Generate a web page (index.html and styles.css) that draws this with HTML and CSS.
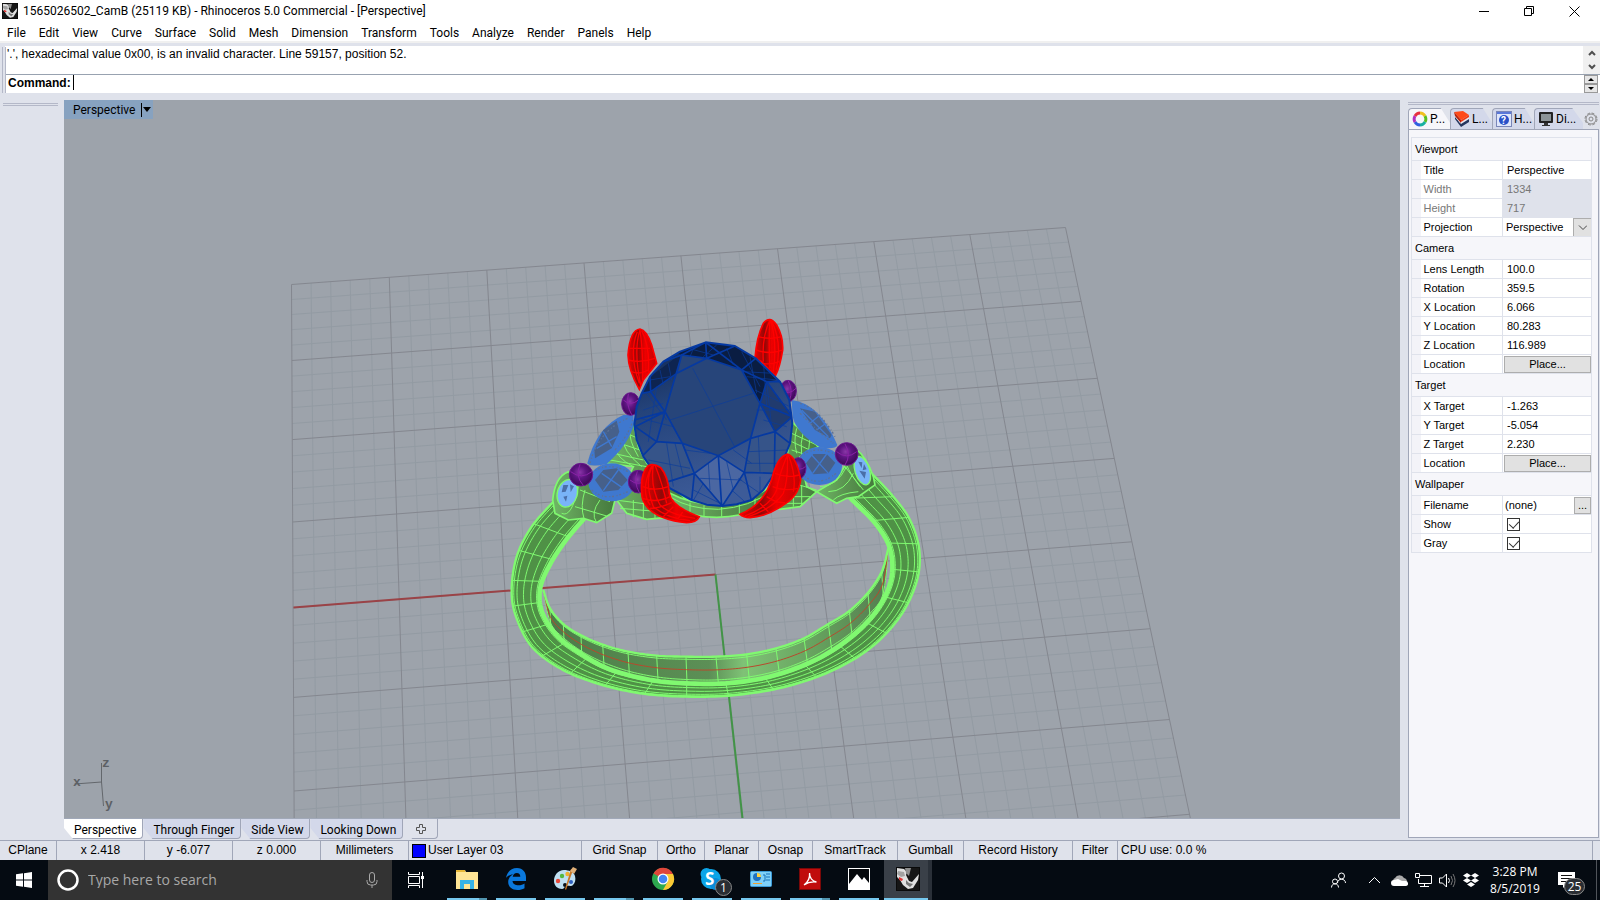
FILE: index.html
```html
<!DOCTYPE html>
<html lang="en">
<head>
<meta charset="utf-8">
<title>1565026502_CamB (25119 KB) - Rhinoceros 5.0 Commercial - [Perspective]</title>
<link rel="stylesheet" href="styles.css">
</head>
<body>
<svg class="defs" width="0" height="0" aria-hidden="true">
  <symbol id="rhino" viewBox="0 0 24 24">
    <rect width="24" height="24" fill="#161616"/>
    <path d="M1 1l7 1 3 3-1 3 3 6 3 1 7-8-1 6-5 8-5 1-5-4-3-5-3-3z" fill="#e0e0e0"/>
    <path d="M9 1h6l-2 8-3-3z" fill="#8e8e8e"/>
    <path d="M2 4l6 1 1 4-4 1-4-3z" fill="#a2a2a2"/>
    <path d="M3 10l4 2-1 2-3-1z" fill="#d33"/>
    <path d="M10 13l3 3 4 1-3 3-4-3z" fill="#777"/>
    <rect x=".5" y=".5" width="23" height="23" fill="none" stroke="#0a0a0a"/>
  </symbol>
</svg>

<header class="titlebar">
  <svg class="app-icon" aria-hidden="true"><use href="#rhino"/></svg>
  <h1>1565026502_CamB (25119 KB) - Rhinoceros 5.0 Commercial - [Perspective]</h1>
  <div class="window-buttons">
    <button aria-label="Minimize"><svg width="11" height="11"><path d="M0 5.5h10" /></svg></button>
    <button aria-label="Restore"><svg width="11" height="11"><path d="M.5 2.5h7v7h-7zM2.500 2.500v-2h7v7h-2"/></svg></button>
    <button aria-label="Close"><svg width="11" height="11"><path d="M.5.5l10 10M10.500.5l-10 10"/></svg></button>
  </div>
</header>
<nav class="menubar">
  <button>File</button><button>Edit</button><button>View</button><button>Curve</button><button>Surface</button><button>Solid</button><button>Mesh</button><button>Dimension</button><button>Transform</button><button>Tools</button><button>Analyze</button><button>Render</button><button>Panels</button><button>Help</button>
</nav>

<section class="command">
  <div class="history">
    <p>'.', hexadecimal value 0x00, is an invalid character. Line 59157, position 52.</p>
    <div class="scroller">
      <button aria-label="Scroll up"><svg width="8" height="6"><path d="M1 5l3-3 3 3"/></svg></button>
      <button aria-label="Scroll down"><svg width="8" height="6"><path d="M1 1l3 3 3-3"/></svg></button>
    </div>
  </div>
  <div class="prompt">
    <label for="cmd">Command:</label><span class="caret"></span>
    <input id="cmd" type="text">
    <div class="spinner">
      <button aria-label="Previous"><svg width="6" height="3"><path d="M0 3l3-3 3 3z"/></svg></button>
      <button aria-label="Next"><svg width="6" height="3"><path d="M0 0l3 3 3-3z"/></svg></button>
    </div>
  </div>
</section>

<main class="workspace">
  <aside class="toolbar"><div class="grip"></div></aside>
  <section class="views">
    <div class="viewport">
      <svg class="scene" id="scene" viewBox="64 100 1336 718" preserveAspectRatio="xMidYMid slice" role="img" aria-label="Ring model">
        <defs>
          <linearGradient id="inner" x1="0" x2="1">
            <stop offset="0" stop-color="#4c7a49"/><stop offset=".3" stop-color="#568a50"/><stop offset=".48" stop-color="#5c8f56"/>
            <stop offset=".58" stop-color="#7fc276"/><stop offset=".8" stop-color="#65a05d"/><stop offset="1" stop-color="#557c50"/>
          </linearGradient>
          <linearGradient id="cup" x1="0" x2="1"><stop offset="0" stop-color="#6fb765"/><stop offset=".5" stop-color="#5a9350"/><stop offset="1" stop-color="#457a3d"/></linearGradient>
          <radialGradient id="ball" cx=".45" cy=".4" r=".6"><stop offset="0" stop-color="#8a36a8"/><stop offset=".45" stop-color="#5c1480"/><stop offset="1" stop-color="#3c0854"/></radialGradient>
          <linearGradient id="claw" x1="0" x2="1"><stop offset="0" stop-color="#e00"/><stop offset=".35" stop-color="#900808"/><stop offset=".6" stop-color="#e00"/><stop offset="1" stop-color="#c00404"/></linearGradient>
          <linearGradient id="gem" x1="0" x2=".3" y1="0" y2="1"><stop offset="0" stop-color="#10264f"/><stop offset=".4" stop-color="#24437a"/><stop offset="1" stop-color="#3d5b98"/></linearGradient>
          <clipPath id="gemclip"><path d="M437 97L525 108 587 145 660 215 688 270 697 340 690 400 670 450 640 495 610 540 575 570 530 583 487 588 440 584 395 570 330 535 285 490 250 440 230 390 223 345 230 290 245 250 270 200 310 155 360 125z"/></clipPath>
        </defs>
        <g id="grid"></g>
        <path class="axis-x" d="M293.500 607.500L715.500 574.500"/>
        <path class="axis-y" d="M715.500 574.500L742.500 818"/>
        <g transform="translate(500 300) scale(.33333)">
          <g id="band"></g>
          <!-- shoulders and stone seats -->
          <g class="metal">
            <path d="M205 515Q165 530 158 600L165 640 205 660 250 655 290 668 335 640 345 600 300 560z"/>
            <path d="M400 370L320 490 400 500 350 600 380 640 440 658 500 652 560 600 440 490 415 440z"/>
            <path d="M875 365L955 440 900 470 920 560 950 575 900 620 840 628 800 600 860 480z"/>
            <path d="M1065 445Q1100 470 1120 530L1125 555 1075 590 1040 595 1010 610 950 575 1010 540z"/>
            <path d="M510 580Q570 612 650 614 740 612 810 560L820 600Q760 650 650 652 570 652 520 620z"/>
          </g>
          <g class="iso">
            <path d="M185 640Q215 655 235 560M240 570L330 605M225 620L320 648M255 570Q240 620 252 655M300 600Q270 640 290 668M345 600L440 612 500 600M360 625L480 635M400 600V652M430 595V658M465 600V655"/>
            <path d="M390 385Q385 420 415 470M370 415Q365 450 425 500M350 445Q345 470 400 500M380 400L425 420M360 430L435 455M340 460L430 480M330 480L440 500"/>
            <path d="M890 385Q880 420 890 460M910 395Q900 430 905 465M930 410L925 460M875 400L950 435M875 425L940 455M875 450L920 465M880 550L950 570M860 590L930 590M850 610L915 610M880 570V620M905 555V615"/>
            <path d="M960 560Q1010 560 1040 500M985 575Q1035 575 1060 520M1000 600Q1020 580 1075 575M1080 560Q1050 520 1040 495M1035 500L1090 570"/>
            <path d="M512 592Q570 628 655 628 750 622 815 572M570 608V635M612 616V648M665 616V650M718 612V645M765 595V625"/>
          </g>
          <g class="pale">
            <ellipse cx="202" cy="580" rx="30" ry="42" transform="rotate(15 202 580)"/>
            <ellipse cx="1087" cy="512" rx="22" ry="44" transform="rotate(-18 1087 512)"/>
          </g>
          <path class="fleck" d="M190 555l15 0-8 20-12 2zM210 553l12 6-10 18zM190 590l12-3-4 18zM1075 485l12 2-2 18zM1092 492l8 16-12 3zM1078 512l20 4-4 20z"/>
          <g class="side-gem">
            <path d="M400 345L370 345Q290 380 262 490 270 502 320 492 390 430 402 370z"/>
            <ellipse cx="335" cy="547" rx="70" ry="57"/>
            <path d="M875 300Q960 310 1012 435 1005 450 960 442 890 400 878 350z"/>
            <ellipse cx="958" cy="498" rx="68" ry="57"/>
          </g>
          <g class="side-table">
            <path d="M350 362L358 395 335 445 285 475 283 450 310 390z"/>
            <path d="M285 540L310 510 350 505 383 540 355 570 310 575z"/>
            <path d="M900 325L945 335 995 405 990 415 945 390z"/>
            <path d="M918 490L940 462 980 462 1006 488 985 520 940 523z"/>
          </g>
          <path class="side-line" d="M290 445L350 410M310 395L335 440M305 520L370 565M355 510L310 572M905 330L985 410M930 370L960 345M950 390L978 370M935 465L985 520M980 462L938 520"/>
          <path class="specks" d="M270 490Q295 390 390 352M345 450Q390 400 398 360M275 570Q320 610 392 570M275 520Q320 480 395 520M900 340Q960 400 1000 430M900 310Q960 330 1005 410M905 520Q950 570 1015 515M900 470Q950 430 1018 470"/>
          <g class="balls">
            <ellipse cx="392" cy="312" rx="27" ry="34"/><ellipse cx="864" cy="273" rx="25" ry="32"/>
            <ellipse cx="243" cy="524" rx="35" ry="34"/><ellipse cx="1040" cy="462" rx="34" ry="34"/>
            <ellipse cx="415" cy="545" rx="30" ry="34"/><ellipse cx="895" cy="505" rx="23" ry="32"/>
          </g>
          <path class="ball-line" d="M370 300Q392 320 415 300M385 282Q378 315 395 344M845 270Q865 288 888 265M865 243Q880 270 868 303M212 515Q245 540 275 515M240 493Q225 530 250 556M1010 455Q1040 480 1070 455M1035 432Q1055 465 1035 495M390 540Q415 560 440 540M412 514Q400 545 418 578M880 500Q900 515 916 500"/>
          <g class="claws">
            <path d="M418 268Q385 210 384 165 390 90 420 87 440 90 455 135L470 190 430 240z"/>
            <path d="M765 175Q770 110 790 70 810 45 830 75 850 110 848 150 840 200 826 228L785 185z"/>
          </g>
          <path class="claw-line" d="M420 90Q400 150 422 255M412 95Q385 160 418 250M420 90Q430 160 428 240M425 92Q450 140 445 215M388 145H450M385 180Q420 190 465 175M394 215Q420 225 445 210M810 60Q785 110 790 185M810 60Q805 130 810 205M812 60Q832 130 820 215M815 62Q848 130 828 210M775 110Q810 120 845 110M768 150Q810 165 848 150M790 190Q810 195 838 185"/>
          <g transform="translate(180 30)">
            <path fill="url(#gem)" d="M437 97L525 108 587 145 660 215 688 270 697 340 690 400 670 450 640 495 610 540 575 570 530 583 487 588 440 584 395 570 330 535 285 490 250 440 230 390 223 345 230 290 245 250 270 200 310 155 360 125z"/>
            <g clip-path="url(#gemclip)">
              <path fill="#0a1d42" d="M350 128L437 97 525 108 587 145 650 210 620 215 600 280 545 180 440 145 365 135z"/>
              <path fill="#0e2450" d="M245 250L270 200 365 130 350 190 272 245z"/>
              <path fill="#27457a" d="M365 135L440 145 545 180 600 280 572 385 475 437 367 400 315 305z"/>
              <path fill="#213b6e" d="M620 215L700 320 645 365 600 280z"/>
              <path fill="#365489" d="M290 395L367 400 403 490 330 515 250 440zM572 385L645 365 690 400 640 490 553 487z"/>
              <path fill="#4b67a2" d="M475 437L553 487 487 588 403 490z"/>
              <path class="facet-thin" d="M398 175L525 412M330 330L580 250M260 250L320 330M290 230L265 395M250 300L310 280M240 325L340 350M270 210L330 200M300 180L310 225M325 160L335 210M385 115L460 135M405 105L390 140M470 105L430 140M500 115L520 165M545 125L600 230M570 140L590 250M550 185L640 190M560 200L650 210M610 150L620 290M585 240L690 290M620 215L635 350M590 300L690 300M610 330L680 350M265 450L390 475M320 400L340 530M345 400L370 500M595 380L600 485M565 425L685 420M560 460L670 460M445 460L450 540M500 455L520 540M420 505L545 510M430 520L395 580M400 540L480 580M535 505L600 550M515 540L560 580M375 420L450 430M520 420L575 460M600 500V560"/>
              <path class="facet" d="M365 135L440 145 545 180 600 280 572 385 475 437 367 400 315 305zM437 97L440 145 525 108M365 135L437 97 545 180 587 145M272 245L350 190 365 135M350 190L440 145M245 250L272 245 315 305 225 350M272 245L270 200M223 330L315 305 290 395 245 440M225 350L290 395 367 400 403 490 475 437 553 487 572 385 645 365 600 280 620 215 545 180M620 215L660 215M600 280L697 320 645 365 690 400M620 215L697 320M645 365L643 490M553 487L640 490M403 490L325 515M403 490L487 588 553 487 575 575M403 490L395 570M475 437L485 588M365 135L310 155"/>
            </g>
            <path class="girdle" d="M437 97L525 108 587 145 660 215 688 270 697 340 690 400 670 450 640 495 610 540 575 570 530 583 487 588 440 584 395 570 330 535 285 490 250 440 230 390 223 345 230 290 245 250 270 200 310 155 360 125z"/>
          </g>
          <g class="claws">
            <path d="M425 580Q420 520 445 497 460 488 482 503 505 530 508 580 515 620 598 650 590 668 560 668 480 660 445 625 425 605 425 580z"/>
            <path d="M720 643Q800 610 820 520 835 470 862 462 890 470 902 540 895 590 850 615 800 650 750 653 730 652 720 643z"/>
          </g>
          <path class="claw-line" d="M460 495Q430 540 460 620 500 655 570 662M460 495Q450 560 480 615 510 645 585 655M465 495Q490 560 500 610M455 498Q420 570 450 615M428 560Q465 575 505 560M428 595Q470 610 510 590M450 625Q480 625 515 608M490 650L520 620M530 662L548 636M862 465Q835 530 830 570 810 620 735 648M862 465Q865 540 850 580 820 625 745 650M865 465Q890 530 880 575M825 520Q860 535 898 525M818 560Q850 575 895 565M800 590Q830 610 855 608M780 610L805 635"/>
        </g>
        <g class="gnomon"><path d="M101.500 763v19M101.500 782l-27 2M101.500 782l2 24"/><text x="102" y="767">z</text><text x="73" y="786">x</text><text x="105" y="808">y</text></g>
      </svg>
      <button class="view-title">Perspective<span class="sep"></span><svg width="8" height="5"><path d="M0 0h8l-4 5z"/></svg></button>
    </div>
    <div class="view-tabs">
      <button class="active">Perspective</button><button>Through Finger</button><button>Side View</button><button>Looking Down</button>
      <button class="add" aria-label="New tab"><svg width="10" height="10"><path d="M3.500.5h3v3h3v3h-3v3h-3v-3h-3v-3h3z"/></svg></button>
    </div>
  </section>
  <aside class="side">
    <div class="grip"></div>
    <div class="side-tabs">
      <button class="active"><svg width="16" height="16" viewBox="0 0 16 16" fill="none" stroke-width="3"><path d="M8 2a6 6 0 0 1 5 3" stroke="#f0c020"/><path d="M13 5a6 6 0 0 1 0 6" stroke="#58c020"/><path d="M13 11a6 6 0 0 1-5 3" stroke="#18b0a0"/><path d="M8 14a6 6 0 0 1-5-3" stroke="#3060e0"/><path d="M3 11a6 6 0 0 1 0-6" stroke="#b030c0"/><path d="M3 5a6 6 0 0 1 5-3" stroke="#e83040"/></svg>P...</button>
      <button><svg width="16" height="16" viewBox="0 0 16 16"><path d="M1 5l5 7 9-5v4l-8 5-6-8z" fill="#26365e"/><path d="M1 4l6 7 8-5v2l-8 5-6-7z" fill="#e8e8f0"/><path d="M0 1l9-1 6 4-8 5z" fill="#ff4a18"/><path d="M7 9l8-5v2l-8 5z" fill="#f03a10"/><path d="M0 1l7 8v3L1 5z" fill="#b82008"/></svg>L...</button>
      <button><svg width="16" height="16" viewBox="0 0 16 16"><rect x=".5" y=".5" width="15" height="15" fill="#dfe6fa" stroke="#7a86b8"/><path d="M1 1h14v2H1z" fill="#5a78d8"/><circle cx="8" cy="9" r="5" fill="#2850c8"/><text x="5" y="13" font-size="10" font-weight="bold" fill="#fff">?</text></svg>H...</button>
      <button><svg width="16" height="16" viewBox="0 0 16 16"><rect x="1" y="1" width="14" height="11" rx="1" fill="#222"/><rect x="3" y="3" width="10" height="7" fill="#8c9498"/><path d="M6 12h4v2h2v1H4v-1h2z" fill="#333"/></svg>Di...</button>
      <button class="gear" aria-label="Panel options"><svg width="14" height="14" viewBox="0 0 14 14"><circle cx="7" cy="7" r="6" stroke-dasharray="3 1.700"/><circle cx="7" cy="7" r="5"/><circle cx="7" cy="7" r="2"/></svg></button>
    </div>
    <div class="side-body">
      <table class="props">
        <colgroup><col class="gut-col"><col class="name-col"><col></colgroup>
        <tbody>
          <tr><th class="group" colspan="3">Viewport</th></tr>
          <tr><td class="gut"></td><th>Title</th><td>Perspective</td></tr>
          <tr class="off"><td class="gut"></td><th>Width</th><td>1334</td></tr>
          <tr class="off"><td class="gut"></td><th>Height</th><td>717</td></tr>
          <tr><td class="gut"></td><th><label for="proj">Projection</label></th><td class="ctl"><div class="pick"><select id="proj"><option>Perspective</option><option>Parallel</option></select><svg width="10" height="6"><path d="M1 .5l4 4 4-4"/></svg></div></td></tr>
          <tr><th class="group" colspan="3">Camera</th></tr>
          <tr><td class="gut"></td><th>Lens Length</th><td>100.0</td></tr>
          <tr><td class="gut"></td><th>Rotation</th><td>359.5</td></tr>
          <tr><td class="gut"></td><th>X Location</th><td>6.066</td></tr>
          <tr><td class="gut"></td><th>Y Location</th><td>80.283</td></tr>
          <tr><td class="gut"></td><th>Z Location</th><td>116.989</td></tr>
          <tr><td class="gut"></td><th>Location</th><td class="ctl"><button class="place">Place...</button></td></tr>
          <tr><th class="group" colspan="3">Target</th></tr>
          <tr><td class="gut"></td><th>X Target</th><td>-1.263</td></tr>
          <tr><td class="gut"></td><th>Y Target</th><td>-5.054</td></tr>
          <tr><td class="gut"></td><th>Z Target</th><td>2.230</td></tr>
          <tr><td class="gut"></td><th>Location</th><td class="ctl"><button class="place">Place...</button></td></tr>
          <tr><th class="group" colspan="3">Wallpaper</th></tr>
          <tr><td class="gut"></td><th>Filename</th><td class="ctl"><div class="file"><span>(none)</span><button class="browse">...</button></div></td></tr>
          <tr><td class="gut"></td><th><label for="show">Show</label></th><td><input id="show" type="checkbox" checked></td></tr>
          <tr><td class="gut"></td><th><label for="gray">Gray</label></th><td><input id="gray" type="checkbox" checked></td></tr>
        </tbody>
      </table>
    </div>
  </aside>
</main>

<footer class="status">
  <button>CPlane</button><span>x 2.418</span><span>y -6.077</span><span>z 0.000</span><button>Millimeters</button>
  <button class="layer"><i></i>User Layer 03</button>
  <button>Grid Snap</button><button>Ortho</button><button>Planar</button><button>Osnap</button><button>SmartTrack</button><button>Gumball</button><button>Record History</button><button>Filter</button><span class="cpu">CPU use: 0.0 %</span><span></span>
</footer>

<nav class="taskbar">
  <button class="start" aria-label="Start"><svg width="16" height="16" fill="#fff"><path d="M0 2.300l7-1v6.200H0zM8 1.200l8-1.200v7.500H8zM0 8.500h7v6.200l-7-1zM8 8.500h8V16l-8-1.200z"/></svg></button>
  <div class="search">
    <svg width="22" height="22"><circle cx="11" cy="11" r="9.500" fill="none" stroke="#fff" stroke-width="2.500"/></svg>
    <input type="text" placeholder="Type here to search" aria-label="Type here to search">
    <svg width="12" height="17" fill="none" stroke="#aaa"><rect x="3.500" y=".5" width="5" height="10" rx="2.500"/><path d="M1 8v1.500a3.500 3.500 0 0 0 3.500 3.500h3A3.500 3.500 0 0 0 11 9.500V8M6 13v3"/></svg>
  </div>
  <button class="taskview" aria-label="Task View"><svg width="17" height="16" fill="none" stroke="#fff"><path d="M.5 0v2.500h11V0M.5 16v-2.500h11V16M.5 4.500h11v7H.5zM14.500 0v16"/><path d="M13 4h3v3h-3z" fill="#fff" stroke="none"/></svg></button>
  <div class="apps">
    <button class="multi" aria-label="File Explorer"><svg width="24" height="24" viewBox="0 0 24 24"><path d="M1 3h9l1 2h12v17H1z" fill="#ffe595"/><path d="M1 3h9v2H1z" fill="#e8b838"/><path d="M5 22v-9h14v9h-4v-5H9v5z" fill="#37b3e6"/></svg></button>
    <button aria-label="Edge"><svg width="24" height="24" viewBox="0 0 24 24"><path d="M2 11C3 5 7 1 13 1c6 0 9 4.500 9 9.500V14H8.500c.3 3 3 4.300 6 4.300 2.400 0 4.500-.8 6-1.800v4.700c-2 1.200-4.500 1.800-7 1.800C8 23 4.200 19.800 4.200 15c0-3.500 1.800-6.200 4.800-7.600C6 7.400 3.500 9 2 11zm6.700-1.200h7.600c0-2.400-1.200-3.800-3.500-3.800-2.200 0-3.700 1.500-4.100 3.800z" fill="#0a78dc"/></svg></button>
    <button aria-label="Paint"><svg width="24" height="24" viewBox="0 0 24 24"><path d="M11 3C5 3 1 8 1 14c0 5 4 8 8 8 2 0 2-2 4-3s5 1 7-1 3-5 2-9-6-6-11-6z" fill="#bfe0f2"/><circle cx="12" cy="18" r="2" fill="#081018"/><circle cx="5" cy="14" r="2.200" fill="#e84838"/><circle cx="9" cy="9" r="2.200" fill="#54b840"/><circle cx="14.500" cy="7" r="2.200" fill="#f0b030"/><circle cx="18" cy="15" r="2" fill="#3060c0"/><path d="M20 3l-7 20-1-1 6-20z" fill="#c87828"/><path d="M17 4l3-4 4 2-3 5z" fill="#e0b078"/></svg></button>
    <button class="multi" aria-label="App"></button>
    <button aria-label="Chrome"><svg width="24" height="24" viewBox="0 0 24 24"><circle cx="12" cy="12" r="11" fill="#2da94f"/><path d="M12 12L2.500 6.500A11 11 0 0 1 22 7z" fill="#e0463a"/><path d="M12 7h10A11 11 0 0 1 12 23l5-9z" fill="#fcc934"/><circle cx="12" cy="12" r="5.500" fill="#fff"/><circle cx="12" cy="12" r="4.300" fill="#4385f4"/></svg></button>
    <button aria-label="Skype"><svg width="24" height="24" viewBox="0 0 24 24"><circle cx="11" cy="12" r="10" fill="#0ca5e8"/><circle cx="6.500" cy="7" r="6" fill="#0ca5e8"/><circle cx="15.500" cy="17" r="6" fill="#0a8cd8"/><text x="5" y="18" font-size="17" font-weight="bold" fill="#fff">S</text></svg><span class="badge">1</span></button>
    <button aria-label="Control Panel"><svg width="24" height="24" viewBox="0 0 24 24"><rect x="1.500" y="4.500" width="21" height="15" rx="1" fill="#7fd0f8" stroke="#3a9ad8"/><circle cx="8" cy="10" r="4" fill="#2070c0"/><path d="M8 10V6a4 4 0 0 1 4 4z" fill="#ffd040"/><path d="M14 8h2v6h-2M17 7h4M17 10h4M17 13h4" stroke="#1870b8" fill="none"/><path d="M4 16.500h9" stroke="#f0a030"/></svg></button>
    <button class="multi" aria-label="Acrobat"><svg width="24" height="24" viewBox="0 0 24 24"><rect x="1.500" y="1.500" width="21" height="21" fill="#c00c0c" stroke="#7a0808"/><path d="M6 18c4-3 6-8 5.500-12 0 5 3 8.500 7 9-4-.5-9 .5-12.500 3z" fill="none" stroke="#fff" stroke-width="1.300"/></svg></button>
    <button aria-label="Photos"><svg width="24" height="24" viewBox="0 0 24 24"><rect x="1.500" y="1.500" width="21" height="21" fill="#05080c" stroke="#fff"/><path d="M2 17l8-10 5 6 2-3 5 6v6H2z" fill="#fff"/></svg></button>
    <button class="current multi" aria-label="Rhinoceros"><svg width="24" height="24"><use href="#rhino"/></svg></button>
  </div>
  <div class="tray">
    <button aria-label="People"><svg width="16" height="16"><circle cx="10.500" cy="4" r="3"/><path d="M6.500 11c0-5 8-5 8 0M.5 15.500c0-5 7-5 7 0"/><circle cx="4" cy="9.500" r="2.500"/></svg></button>
    <button class="chev" aria-label="Show hidden icons"><svg width="13" height="8"><path d="M1 7l5.500-5.500L12 7"/></svg></button>
    <button aria-label="OneDrive"><svg width="17" height="12"><path d="M3 9a3 3 0 0 1 1-5 5 5 0 0 1 9 0 4 4 0 0 1 3 4z" fill="#aaa" stroke="none"/><path d="M3 12a3 3 0 0 1 0-6l4-1 4 2 3 0a2.500 2.500 0 0 1 1 5z" fill="#fff" stroke="none"/></svg></button>
    <button aria-label="Network"><svg width="17" height="15"><path d="M5 2.500h11.500v8H3.500V6M.5.5h4v4h-4zM9.500 10.500v3M5 13.500h9"/></svg></button>
    <button aria-label="Volume"><svg width="17" height="15"><path d="M.5 5h3l4-4v13l-4-4h-3z"/><path d="M9.500 5q2 2.500 0 5"/><path d="M12 3q3 4.500 0 9M14 1q4 6.500 0 13" stroke="#777"/></svg></button>
    <button aria-label="Dropbox"><svg width="16" height="14"><path d="M4 0l4 2.500L4 5 0 2.500zM12 0l4 2.500L12 5 8 2.500zM4 5l4 2.500L4 10 0 7.500zM12 5l4 2.500-4 2.500-4-2.500zM8 9l4 2.500L8 14l-4-2.500z" fill="#fff" stroke="none"/></svg></button>
    <button class="clock"><span>3:28 PM</span><span>8/5/2019</span></button>
    <button class="notes" aria-label="Notifications"><svg width="17" height="16"><path d="M0 0h17v13H8l-3 3v-3H0z" fill="#fff" stroke="none"/><path d="M3 3.500h11M3 6.500h11M3 9.500h7" stroke="#111"/></svg><span class="badge">25</span></button>
  </div>
  <button class="peek" aria-label="Show desktop"></button>
</nav>
<script src="scene.js"></script>
</body>
</html>
```
FILE: styles.css
```css
* { box-sizing: border-box; }
body {
  margin: 0; height: 100vh; display: flex; flex-direction: column; overflow: hidden;
  background: #dfe2eb; color: #000; font: 12px/16px "Liberation Sans", Arial, sans-serif;
}
button { font: inherit; color: inherit; border: 0; padding: 0; margin: 0; background: none; }
input { font: inherit; border: 0; outline: 0; padding: 0; margin: 0; }
.defs { position: absolute; }

.titlebar { display: flex; align-items: center; height: 22px; padding: 0 3px 0 2px; background: #fff; }
.app-icon { width: 16px; height: 16px; margin-right: 5px; }
.titlebar h1 { margin: 0; flex: 1; font: 12px/22px Roboto, sans-serif; }
.window-buttons { display: flex; }
.window-buttons button { width: 45px; height: 20px; display: flex; align-items: center; justify-content: center; }
.window-buttons svg { fill: none; stroke: #000; }

.menubar { display: flex; height: 19px; background: #fff; }
.menubar button { padding: 0 6px 0 7px; font: 12px/22px Roboto, "Open Sans", sans-serif; }

.command { padding: 3px 0 0 5px; border-top: 2px solid #f0f0f0; position: relative; flex: none; }
.command::before { content: ""; position: absolute; left: 2px; top: 4px; bottom: 0; width: 2px; border-left: 1px solid #b4b8c8; border-right: 1px solid #b4b8c8; }
.history { display: flex; height: 29px; padding-left: 2px; background: #fff; border-bottom: 1px solid #98a2b0; }
.history p { margin: 0; flex: 1; line-height: 16px; }
.scroller { width: 17px; display: flex; flex-direction: column; background: #f0f0f0; }
.scroller button { flex: 1; display: flex; align-items: center; justify-content: center; }
.scroller svg { fill: none; stroke: #505050; stroke-width: 2; }
.prompt { display: flex; align-items: flex-start; height: 18px; padding-left: 3px; background: #fff; }
.prompt label { font-weight: bold; }
.caret { width: 1px; height: 15px; margin-left: 2px; background: #000; }
.prompt input { flex: 1; height: 16px; background: transparent; }
.spinner { width: 14px; margin-right: 2px; display: flex; flex-direction: column; }
.spinner button { height: 9px; display: flex; align-items: center; justify-content: center; background: #e6e6e6; border: 1px solid #999; }

.workspace { flex: 1; min-height: 0; display: flex; padding-top: 7px; }
.grip { height: 3px; border-top: 1px solid #b4b8c8; border-bottom: 1px solid #b4b8c8; }
.toolbar { width: 64px; padding: 3px 6px 0 3px; }
.views { flex: 1; min-width: 0; display: flex; flex-direction: column; }
.viewport { flex: 1; min-height: 0; position: relative; background: #9da3ab; border-bottom: 1px solid #a0a8b8; }
.scene { position: absolute; inset: 0; width: 100%; height: 100%; }
.view-title { position: absolute; left: 0; top: 0; height: 19px; padding: 0 2px 0 9px; display: flex; align-items: center; background: #87a2c0; font: 12px/20px Roboto, "Open Sans", sans-serif; }
.view-title .sep { width: 1px; height: 14px; margin: 0 1px 0 6px; background: #000; }
.view-tabs { display: flex; height: 21px; padding-bottom: 1px; font: 12px/22px Roboto, "Open Sans", sans-serif; }
.view-tabs button { padding: 0 6px 0 10px; background: #d3d8ea; border-right: 1px solid #a0a6b8; border-bottom: 1px solid #a0a6b8; border-radius: 0 0 4px 0; clip-path: polygon(0 0, 100% 0, 100% 100%, 9px 100%, 0 9px); }
.view-tabs .active { background: #fff; }
.view-tabs .add { padding: 0 11px 0 13px; background: #dfe2eb; }
.add svg { display: block; fill: none; stroke: #555; }

.side { width: 200px; padding: 2px 1px 2px 8px; display: flex; flex-direction: column; }
.side-tabs { display: flex; height: 24px; padding-top: 3px; }
.side-tabs button { width: 42px; display: flex; align-items: center; gap: 2px; padding-left: 3px; overflow: hidden; background: #d3d8ea; border-top: 1px solid #a0a6b8; border-left: 1px solid #a0a6b8; border-radius: 4px 0 0 0; clip-path: polygon(0 0, 78% 0, 100% 70%, 100% 100%, 0 100%); font: 12px/18px Roboto, sans-serif; }
.side-tabs .active { background: #f6f6fa; }
.side-tabs button:nth-child(4) { width: 49px; }
.side-tabs .gear { flex: 1; justify-content: center; padding: 0; background: none; border: 0; clip-path: none; }
.gear svg { fill: none; stroke: #888; }
.side-body { flex: 1; min-height: 0; padding: 7px 6px 0 2px; background: #f6f6fa; border: 1px solid #a0a6b8; }
.props { width: 100%; table-layout: fixed; border-collapse: collapse; font: 11px/13px "Liberation Sans", Arial, sans-serif; border: 1px solid #dfe2eb; }
.gut-col { width: 9px; }
.name-col { width: 82px; }
.props tr { height: 19px; }
.props th { font-weight: normal; text-align: left; padding: 0 0 0 3px; background: #fff; border: solid #dfe2eb; border-width: 1px 1px 1px 0; white-space: nowrap; }
.props td { padding: 0 0 0 4px; background: #fff; border-top: 1px solid #dfe2eb; border-bottom: 1px solid #dfe2eb; }
.props .gut { padding: 0; background: #f3f3f8; }
.props .group { height: 23px; padding-left: 3px; background: #f6f6fa; border-width: 1px; }
.props .off th, .props .off td { color: #777; }
.props .off td:last-child { background: #dfe2eb; }
.props .ctl { padding: 0 0 0 1px; }
.pick { display: flex; height: 18px; }
.pick select { flex: 1; min-width: 0; appearance: none; border: 0; background: transparent; font: inherit; padding: 0 2px; color: #000; }
.pick svg { width: 18px; height: 18px; padding: 6px 4px; fill: none; stroke: #444; background: #e1e1e1; border: solid #adadad; border-width: 1px 0 0 1px; pointer-events: none; }
.place { width: 100%; height: 17px; display: block; background: #e1e1e1; border: 1px solid #adadad; }
.file { display: flex; align-items: center; justify-content: space-between; height: 18px; padding-left: 1px; }
.browse { width: 17px; height: 17px; background: #e1e1e1; border: 1px solid #adadad; }
.props input[type=checkbox] { appearance: none; display: block; width: 13px; height: 13px; border: 1px solid #333; background: #fff; position: relative; }
.props input:checked::after { content: ""; position: absolute; left: 3px; top: 0; width: 5px; height: 8px; border: solid #333; border-width: 0 1px 1px 0; transform: rotate(42deg); }

.status { display: grid; grid-template-columns: 57px 88px 88px 88px 88px 173px 76px 47px 54px 54px 85px 66px 109px 45px 1fr 7px; height: 20px; flex: none; border-top: 1px solid #a0a6b8; line-height: 19px; text-align: center; }
.status > * { border-right: 1px solid #a0a6b8; white-space: nowrap; }
.status > :last-child { border: 0; }
.status .layer { display: flex; align-items: center; padding-left: 3px; gap: 2px; }
.layer i { width: 14px; height: 14px; background: #00f; border: 1px solid #000; }
.status .cpu { text-align: left; padding-left: 3px; }

.taskbar { display: flex; height: 40px; flex: none; background: #050b12; color: #fff; font-family: "Open Sans", sans-serif; }
.taskbar button { display: flex; align-items: center; justify-content: center; }
.start { width: 48px; }
.search { width: 344px; display: flex; align-items: center; padding: 0 14px 0 9px; gap: 9px; background: #333; }
.search input { flex: 1; min-width: 0; background: transparent; color: #fff; font-size: 14px; }
.search input::placeholder { color: #a8a8a8; opacity: 1; }
.taskview { width: 48px; }
.apps { display: flex; gap: 9px; margin-left: 7px; }
.apps button { width: 40px; position: relative; border-bottom: 2px solid #76c8ee; }
.apps .multi::after { content: ""; position: absolute; right: 0; bottom: -2px; width: 8px; height: 2px; background: #5296b0; }
.apps .current { width: 48px; margin-left: -4px; background: #3a4048; }
.apps .current::after { width: 4px; top: 0; height: auto; background: #2a3038; }
.badge { position: absolute; right: 0; bottom: 2px; min-width: 17px; height: 17px; border: 1px solid #888; border-radius: 9px; background: #2a2e33; font-size: 12px; line-height: 15px; text-align: center; }
.tray { margin-left: auto; display: flex; padding-right: 7px; }
.tray svg { fill: none; stroke: #fff; }
.tray button { width: 24px; }
.tray .chev { width: 36px; padding-left: 10px; }
.tray .clock { width: 64px; flex-direction: column; font-size: 12px; line-height: 17px; }
.tray .notes { width: 42px; position: relative; padding-right: 4px; }
.notes .badge { right: 4px; bottom: 5px; min-width: 21px; }
.peek { width: 4px; border-left: 1px solid #50545a; }

.minor { stroke: #939ba3; }
.major { stroke: #84878f; }
.axis-x { stroke: #9a4347; stroke-width: 2; }
.axis-y { stroke: #429447; stroke-width: 2; }
.tube { fill: #4f9146; }
.inner { fill: url(#inner); }
.metal { fill: url(#cup); stroke: #80f970; stroke-width: 5; }
.iso { fill: none; stroke: #80f970; stroke-width: 3; }
.edge { fill: none; stroke: #80f970; stroke-width: 7; }
.crease { fill: none; stroke: #80f970; stroke-width: 14; }
.seam { fill: none; stroke: #b8482c; stroke-width: 3; }
.pale { fill: #79b4f8; stroke: #80f970; stroke-width: 4; }
.fleck { fill: #4a6fa8; }
.side-gem { fill: #3f78cf; }
.side-table { fill: #46608a; }
.side-line { fill: none; stroke: #3f78cf; stroke-width: 4; }
.specks { fill: none; stroke: #5c7196; stroke-width: 4; stroke-dasharray: 6 8 3 5; }
.balls { fill: url(#ball); stroke: #6a1590; stroke-width: 3; }
.ball-line { fill: none; stroke: #8a22a6; stroke-width: 3; }
.claws { fill: url(#claw); stroke: #f00; stroke-width: 5; }
.claw-line { fill: none; stroke: #f00; stroke-width: 4; }
.facet { fill: none; stroke: #0539a2; stroke-width: 5; }
.facet-thin { fill: none; stroke: #0a3d9c; stroke-width: 2; }
.girdle { fill: none; stroke: #0539a2; stroke-width: 6; stroke-linejoin: round; }
.gnomon { fill: none; stroke: #63676c; }
.gnomon text { fill: #5c6065; stroke: none; font: bold 13px "Liberation Mono", monospace; }
```
FILE: scene.js
```js
const NS = "http://www.w3.org/2000/svg";
function add(parent, d, cls) {
  const p = document.createElementNS(NS, "path");
  p.setAttribute("d", d);
  p.setAttribute("class", cls);
  parent.appendChild(p);
}

// Construction grid: unit square mapped on to four projected corners.
const [p0, p1, p2, p3] = [[291.5, 284.5], [1065.5, 227.5], [1169.5, 719.5], [294, 791]];
const dx1 = p1[0] - p2[0], dx2 = p3[0] - p2[0], sx = p0[0] - p1[0] + p2[0] - p3[0];
const dy1 = p1[1] - p2[1], dy2 = p3[1] - p2[1], sy = p0[1] - p1[1] + p2[1] - p3[1];
const det = dx1 * dy2 - dx2 * dy1;
const g = (sx * dy2 - dx2 * sy) / det, h = (dx1 * sy - sx * dy1) / det;
const a = p1[0] - p0[0] + g * p1[0], b = p3[0] - p0[0] + h * p3[0];
const c = p1[1] - p0[1] + g * p1[1], d = p3[1] - p0[1] + h * p3[1];
function project(col, row) {
  const u = col / 40, v = row / 30, w = g * u + h * v + 1;
  return ((a * u + b * v + p0[0]) / w).toFixed(1) + " " + ((c * u + d * v + p0[1]) / w).toFixed(1);
}
const grid = document.getElementById("grid");
for (const major of [false, true]) {
  for (let i = 0; i <= 40; i++) {
    if ((i % 5 === 0) === major) {
      add(grid, `M${project(i, 0)}L${project(i, 40)}`, major ? "major" : "minor");
      add(grid, `M${project(0, i)}L${project(40, i)}`, major ? "major" : "minor");
    }
  }
}

// Ring band: pairs of outer edge and inner crease points.
const tube = [
  [165, 600, 265, 650], [95, 680, 205, 720], [50, 770, 155, 795], [35, 870, 125, 865], [48, 950, 130, 935],
  [95, 1040, 175, 1005], [180, 1105, 240, 1055], [290, 1150, 330, 1105], [420, 1180, 450, 1137], [560, 1190, 560, 1148],
  [700, 1186, 690, 1147], [850, 1162, 820, 1125], [990, 1115, 950, 1075], [1110, 1045, 1055, 1005], [1200, 950, 1130, 925],
  [1250, 845, 1170, 835], [1258, 750, 1165, 745], [1230, 660, 1120, 670], [1180, 590, 1045, 595], [1115, 520, 1030, 570]
];
const face = [
  [130, 870, 130, 870], [152, 975, 150, 925], [192, 1020, 190, 972], [245, 1060, 243, 1006], [312, 1095, 308, 1034],
  [388, 1122, 384, 1055], [474, 1140, 470, 1067], [561, 1148, 558, 1070], [655, 1149, 648, 1070], [748, 1140, 740, 1063],
  [838, 1120, 828, 1045], [922, 1088, 912, 1015], [995, 1048, 985, 972], [1056, 1005, 1048, 933], [1110, 950, 1104, 878],
  [1150, 890, 1145, 815], [1165, 745, 1165, 745]
];
function mix(pts, t) { return pts.map(q => [q[0] + (q[2] - q[0]) * t, q[1] + (q[3] - q[1]) * t]); }
function dense(pts) {
  const out = [];
  for (let i = 0; i < pts.length - 1; i++) {
    const q = [pts[Math.max(i - 1, 0)], pts[i], pts[i + 1], pts[Math.min(i + 2, pts.length - 1)]];
    for (let s = 0; s < 10; s++) {
      const t = s / 10;
      out.push([0, 1].map(k => 0.5 * (2 * q[1][k] + (q[2][k] - q[0][k]) * t +
        (2 * q[0][k] - 5 * q[1][k] + 4 * q[2][k] - q[3][k]) * t * t +
        (3 * q[1][k] - q[0][k] - 3 * q[2][k] + q[3][k]) * t * t * t)));
    }
  }
  out.push(pts[pts.length - 1]);
  return out;
}
const line = pts => "M" + pts.map(q => q[0].toFixed(1) + " " + q[1].toFixed(1)).join("L");
const band = document.getElementById("band");
function surface(pts, cls, fractions, step) {
  const o = dense(mix(pts, 0)), n = dense(mix(pts, 1));
  add(band, line(o.concat(n.slice().reverse())) + "z", cls);
  for (const f of fractions) add(band, line(dense(mix(pts, f))), "iso");
  for (let i = step; i < o.length; i += step) add(band, line([o[i], n[i]]), "iso");
}
surface(face, "inner", [0.12, 0.9], 10);
add(band, line(dense(mix(face, 0.5))), "seam");
add(band, line(dense(mix(face, 1))), "edge");
surface(tube, "tube", [0.07, 0.18, 0.4, 0.65, 0.85], 9);
add(band, line(dense(mix(tube, 0))), "edge");
add(band, line(dense(mix(tube, 0.95))), "crease");
```
